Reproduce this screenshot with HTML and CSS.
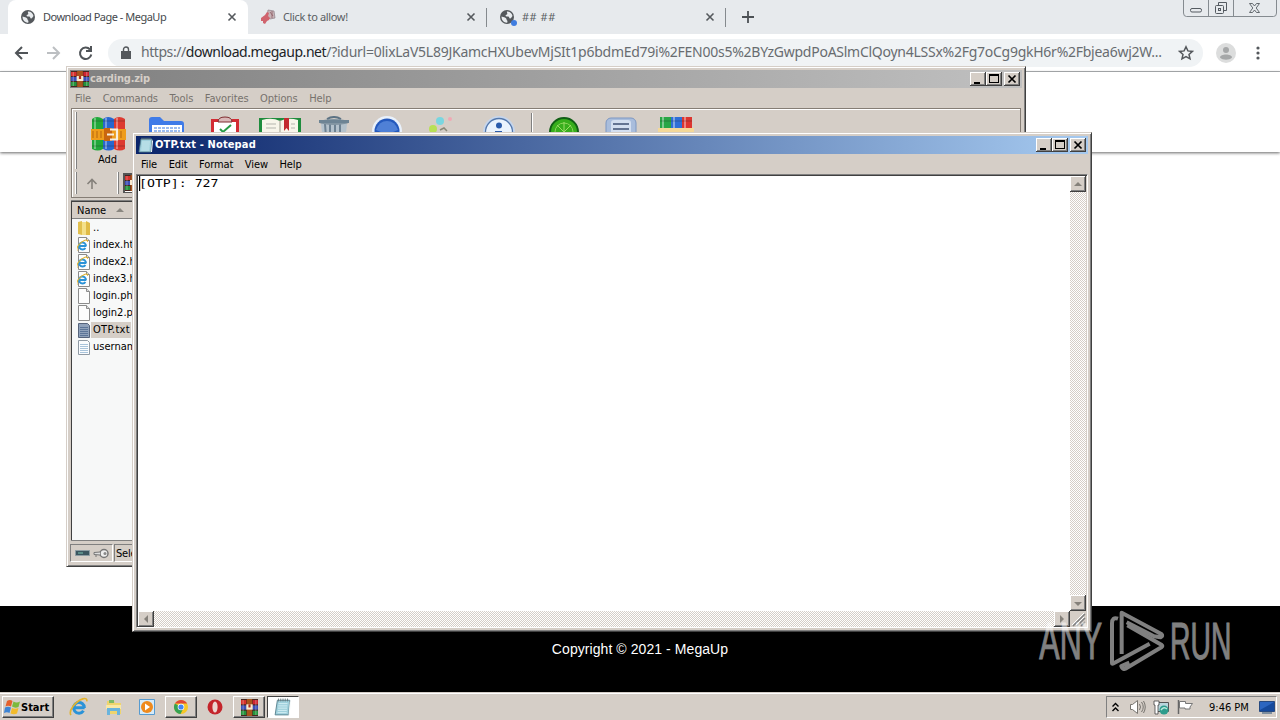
FILE: index.html
```html
<!DOCTYPE html>
<html lang="en">
<head>
  <meta charset="UTF-8" />
  <title>Download Page - MegaUp</title>
  <link rel="stylesheet" href="styles.css">
</head>
<body>

  <!-- shared icons -->
  <svg class="defs" width="0" height="0">
    <symbol id="close" viewBox="0 0 10 10"><path d="M1.5 1.5l7 7M8.5 1.5l-7 7" stroke="#55595d" stroke-width="1.6"/></symbol>
    <symbol id="globe" viewBox="0 0 16 16">
      <circle cx="8" cy="8" r="7" fill="#54585c"/>
      <path d="M2.6 7.6c2 .6 3.6.8 4.600 2 .6 1 .2 1.600 1.200 2.200v1.800C5 14 2.200 11 2.600 7.600zM8 2.400c2.600-.2 5 1.600 5.500 4.600-.8 1-1.200 2.400-2.500 2.400-1 0-.6-1.600-1.600-1.900-1.200-.3-2.600.2-2.800-.8-.2-1.200 1.400-1 1.700-1.800.2-.8-.8-1.300-.3-2.500z" fill="#e9ecef"/>
    </symbol>
    <symbol id="rar" viewBox="0 0 16 16">
      <path d="M0 0h16v16H0z" fill="#44251f"/>
      <path d="M0 1h5v4H0z" fill="#d8302c"/><path d="M5.500 1h5v4h-5z" fill="#c83a2c"/><path d="M11 1h5v4h-5z" fill="#cf2430"/>
      <path d="M0 6h16v4H0z" fill="#3c4fb8"/><path d="M0 11h5v4H0zM11 11h5v4h-5z" fill="#23933b"/>
      <path d="M5.500 0h5v16h-5z" fill="#a8541c"/><path d="M5 5h6v5H5z" fill="#f8e9d0"/><path d="M7 5h2v3H7z" fill="#b32c1c"/>
      <path d="M2 1v14M14 1v14" stroke="#eee" stroke-opacity=".35"/>
    </symbol>
    <symbol id="note" viewBox="0 0 16 16">
      <path d="M3 2h11l-1 13H1z" fill="#9fd0dc" stroke="#557f8b" stroke-width=".8"/>
      <path d="M4 5h8M3.800 7h8M3.600 9h8M3.400 11h8M3.200 13h8" stroke="#d8f2f5" stroke-width=".8"/>
      <path d="M4 .5v2.500M6 .5v2.500M8 .5v2.500M10 .5v2.500M12 .5v2.500" stroke="#68777b" stroke-width=".8"/>
      <path d="M14 3l1 1-1 11h-1z" fill="#f5fafa"/>
    </symbol>
    <symbol id="page" viewBox="0 0 14 16"><path d="M1.500 .5h8l3 3v12h-11z" fill="#fdfdfd" stroke="#8c8c8c"/><path d="M9.500 .5v3h3" fill="#ddd" stroke="#8c8c8c"/></symbol>
    <symbol id="ie" viewBox="0 0 16 16">
      <path d="M4 8.600h8.500M12.300 8.800A4.300 4.300 0 1 0 11.600 11" fill="none" stroke="#2b93d8" stroke-width="2.400"/>
      <path d="M1.500 14.500C-.5 11 5 3.500 11 1.500c2.500-.8 3.600.2 3.200 2" fill="none" stroke="#e3b32c" stroke-width="1.300"/>
    </symbol>
    <symbol id="lines" viewBox="0 0 14 16"><path d="M1.500 1.500h9l2 2v12h-11z" fill="#fafcfe" stroke="#909aa4"/><path d="M3 5.500h8M3 7.500h8M3 9.500h8M3 11.500h8M3 13.500h8" stroke="#a9c4db"/></symbol>
    <symbol id="min" viewBox="0 0 16 14"><path d="M4 10h6v2H4z"/></symbol>
    <symbol id="max" viewBox="0 0 16 14"><path d="M3 2h10v9H3zM4 4v6h8V4z" fill-rule="evenodd"/></symbol>
    <symbol id="x" viewBox="0 0 16 14"><path d="M4.500 3.500l7 7M11.500 3.500l-7 7" stroke="#000" stroke-width="1.700"/></symbol>
  </svg>

  <div class="desktop">

    <!-- browser -->
    <div class="tabs">
      <div class="tab active">
        <svg width="16" height="16"><use href="#globe"/></svg>
        <span>Download Page - MegaUp</span>
        <svg class="close" width="10" height="10"><use href="#close"/></svg>
      </div>
      <div class="tab">
        <svg width="16" height="16" viewBox="0 0 16 16">
          <path d="M8 1l6 1 1 7-5 1-3-3z" fill="#c8b4b8" stroke="#8f8088" stroke-width=".7"/>
          <path d="M10 3l3 4M12 2v7" stroke="#8d5d66" stroke-width=".8"/>
          <path d="M1 9l4-3 2-3 2 1-1 3 2 2-1 2-2 1-2 3-2-1v-2L1 12z" fill="#d0646e"/>
        </svg>
        <span>Click to allow!</span>
        <svg class="close" width="10" height="10"><use href="#close"/></svg>
      </div>
      <div class="tab loading">
        <svg width="18" height="18" viewBox="0 0 18 18"><use href="#globe" width="16" height="16" y="1"/><circle cx="15" cy="15" r="3" fill="#3f7de0"/></svg>
        <span>## ##</span>
        <svg class="close" width="10" height="10"><use href="#close"/></svg>
      </div>
      <svg class="plus" width="12" height="12"><path d="M6 0v12M0 6h12" stroke="#4c5054" stroke-width="1.800"/></svg>
      <svg class="controls" width="94" height="18" fill="none" stroke="#858b90">
        <path d="M.5 0v13q0 3.500 3 3.500h87q3 0 3-3.500V0M25.500 0v16M50.500 0v16"/>
        <g stroke="#555b61"><rect x="7.500" y="8.500" width="11" height="3.500" rx="1.500"/><path d="M35.500 5V2.500h8v8H41"/><rect x="32.500" y="5.500" width="8" height="8" rx="1"/><rect x="35.500" y="8.500" width="2" height="2"/>
        <path d="M66.500 3.500h3l2 2.500 2-2.500h3l-3.300 4.500 3.300 4.500h-3l-2-2.500-2 2.500h-3l3.300-4.500z" stroke-width=".9"/></g>
      </svg>
    </div>

    <div class="toolbar">
      <svg width="80" height="16" fill="none" stroke="#505458" stroke-width="2">
        <path d="M14 8H2M8 2L2 8l6 6"/>
        <path d="M33 8h12M39 2l6 6-6 6" stroke="#bcbfc2"/>
        <path d="M76 4.500A5.700 5.700 0 1 0 77.300 9.500M77 1v5h-5"/>
      </svg>
      <div class="omnibox">
        <svg width="10" height="13" viewBox="0 0 10 13"><path d="M0 5h10v8H0z" fill="#54585c"/><path d="M2.500 5V3.500a2.500 2.500 0 0 1 5 0V5" fill="none" stroke="#54585c" stroke-width="1.400"/></svg>
        <span class="url">https://<b>download.megaup.net</b><i>/?idurl=0lixLaV5L89JKamcHXUbevMjSIt1p6bdmEd79i%2FEN00s5%2BYzGwpdPoASlmClQoyn4LSSx%2Fg7oCg9gkH6r%2Fbjea6wj2W...</i></span>
        <svg class="star" width="16" height="16" viewBox="0 0 16 16"><path d="M8 1.800l1.900 4.100 4.500.5-3.400 3 1 4.400L8 11.500l-4 2.300 1-4.400-3.400-3 4.500-.5z" fill="none" stroke="#54585c" stroke-width="1.500"/></svg>
      </div>
      <svg class="avatar" width="20" height="20"><circle cx="10" cy="10" r="10" fill="#dcdddd"/><circle cx="10" cy="7" r="3" fill="#a5a7a8"/><path d="M4 14.500c0-4 12-4 12 0-2.500 3-9.500 3-12 0z" fill="#a5a7a8"/></svg>
      <svg width="4" height="14" fill="#54585c"><circle cx="2" cy="2" r="1.600"/><circle cx="2" cy="7" r="1.600"/><circle cx="2" cy="12" r="1.600"/></svg>
    </div>

    <div class="site">
      <div class="site-header"></div>
      <div class="site-footer">Copyright © 2021 - MegaUp</div>
    </div>

    <!-- WinRAR -->
    <div class="window winrar">
      <div class="titlebar">
        <svg width="18" height="16" viewBox="0 0 16 16" preserveAspectRatio="none"><use href="#rar" width="16" height="16"/></svg>
        <span>carding.zip</span>
        <div class="buttons">
          <svg width="16" height="14"><use href="#min"/></svg>
          <svg width="16" height="14"><use href="#max"/></svg>
          <svg width="16" height="14"><use href="#x"/></svg>
        </div>
      </div>
      <div class="menu">
        <span>File</span><span>Commands</span><span>Tools</span><span>Favorites</span><span>Options</span><span>Help</span>
      </div>
      <div class="rebar">
        <div class="tools">
          <div class="grip"></div>
          <div class="tool w56">
            <svg width="36" height="36" viewBox="0 0 36 36">
              <path d="M1 3q5-4 11 0v30q-5 3-11 0z" fill="#20a83a"/><path d="M12 3q5-4 11 0v30q-5 3-11 0z" fill="#2867d0"/><path d="M23 3q5-4 11 0v30q-5 3-11 0z" fill="#dd3a30"/>
              <path d="M4 2v31M15 2v31M26 2v31" stroke="#fff" stroke-opacity=".35" stroke-width="2"/>
              <path d="M1 5h33M1 30h33" stroke="#222" stroke-opacity=".3"/>
              <path d="M0 13h35v11H0z" fill="#ee9c1c"/><path d="M2 15v7M6 15v7M10 15v7M30 15v7" stroke="#b5650e"/>
              <path d="M13 12h8v13h-8z" fill="#c9660f"/><path d="M19 13.500h7v10h-7M16 18.500h7" fill="none" stroke="#f6eee0" stroke-width="2.200"/>
            </svg>
            <span>Add</span>
          </div>
          <div class="tool w60"><svg width="38" height="34"><path d="M1 4q0-3 3-3h8l4 4h17q3 0 3 3v24H1z" fill="#3f7be8"/><path d="M4 9h30v20H4z" fill="#fff"/><path d="M6 12h26M6 15h26" stroke="#9cbcf0" stroke-width="2" stroke-dasharray="3 1"/></svg></div>
          <div class="tool w56"><svg width="30" height="34"><path d="M1 3h28v30H1z" fill="#d22c34"/><path d="M4 6h22v26H4z" fill="#fff"/><path d="M8 6q0-5 7-5t7 5z" fill="#d9b8b8" stroke="#7f2d30"/><path d="M10 13l3 3 8-7" fill="none" stroke="#269b45" stroke-width="2"/></svg></div>
          <div class="tool w54"><svg width="42" height="34"><path d="M0 2h42v31H0z" fill="#1f8c3d"/><path d="M3 4q10-3 18 1 8-4 18-1v28H3z" fill="#f8f5ea"/><path d="M21 4v28" stroke="#998"/><path d="M7 8h10M7 12h10M32 8h4M32 12h4" stroke="#b5b5ae"/><path d="M25 2h5v13l-2.500-3-2.500 3z" fill="#c32a30"/></svg></div>
          <div class="tool w54"><svg width="32" height="34"><path d="M3 8h26l-3 26H6z" fill="#b4c2cc"/><path d="M7 8l2 26M12 8v26M17 8v26M22 8v26" stroke="#6d8292" stroke-width="2"/><ellipse cx="16" cy="6" rx="15" ry="3" fill="#8295a2"/><path d="M1 4h30v3H1z" fill="#6d8494"/><path d="M9 3q7-4 14 0" fill="none" stroke="#5d7384" stroke-width="2"/></svg></div>
          <div class="tool w52"><svg width="30" height="34"><circle cx="15" cy="15" r="15" fill="#e9f1fb"/><circle cx="15" cy="15" r="12.500" fill="#2459bd"/><path d="M4 14q3-9 11-9t11 9q-11 6-22 0z" fill="#4f80d6"/></svg></div>
          <div class="tool w56"><svg width="30" height="34"><circle cx="14" cy="5" r="4" fill="#62d8e6" fill-opacity=".8"/><circle cx="24" cy="3" r="2" fill="#f0a9b4"/><circle cx="7" cy="13" r="4" fill="#b8e055"/><path d="M14 14l4-2 3 3" stroke="#887" stroke-width="1.500" fill="none"/></svg></div>
          <div class="tool w60"><svg width="32" height="34"><circle cx="16" cy="16" r="16" fill="#c5d5ec"/><circle cx="16" cy="16" r="13.500" fill="#eaf3fd" stroke="#5378ad" stroke-width="1.300"/><circle cx="16" cy="9.500" r="3" fill="#2b5cab"/><path d="M12 15h7v10h-7z" fill="#2b5cab"/></svg></div>
          <div class="sep"></div>
          <div class="tool w58"><svg width="30" height="34"><circle cx="15" cy="16" r="14" fill="#37ae1c" stroke="#115f16" stroke-width="2"/><circle cx="15" cy="16" r="9" fill="none" stroke="#8bd45a"/><path d="M15 6v10M8 9l7 7 7-7" stroke="#9cdd68" fill="none"/></svg></div>
          <div class="tool w56"><svg width="32" height="34"><rect x="1" y="2" width="30" height="32" rx="5" fill="#a9bddc" stroke="#7d97c2"/><rect x="6" y="4" width="20" height="28" rx="3" fill="#d4dff0"/><path d="M8 8h16M8 13h16" stroke="#3f5273" stroke-width="1.500"/></svg></div>
          <div class="tool w54"><svg width="36" height="34"><path d="M2 1h11v12H2z" fill="#29a646"/><path d="M13 1h11v12H13z" fill="#2f6fd6"/><path d="M24 1h10v12H24z" fill="#dc352f"/><path d="M5 1v11M16 1v11M27 1v11" stroke="#fff" stroke-opacity=".4" stroke-width="2"/><path d="M2 5h32" stroke="#222" stroke-opacity=".3"/><path d="M0 12h36v20H0z" fill="#f4d898"/></svg></div>
        </div>
        <div class="address">
          <div class="grip"></div>
          <svg class="up" width="12" height="12"><path d="M6 11V2M1.500 6L6 1.500 10.500 6" fill="none" stroke="#85817b" stroke-width="1.600"/></svg>
          <div class="grip"></div>
          <div class="combo"><svg width="16" height="16"><use href="#rar"/></svg></div>
        </div>
      </div>
      <div class="files">
        <div class="files-head">Name <svg width="8" height="4"><path d="M4 0l4 4H0z" fill="#8a8781"/></svg></div>
        <div class="file"><svg width="14" height="16" viewBox="0 0 14 16"><path d="M1 2l4-1v14l-4-1z" fill="#e2c04e"/><path d="M5 2h4v13H5z" fill="#f4e08a"/><path d="M9 1l4 2v12H9z" fill="#e0bb47"/></svg><span>..</span></div>
        <div class="file"><svg width="14" height="16" viewBox="0 0 14 16"><use href="#page" width="14" height="16"/><use href="#ie" y="2" x="-1" width="13" height="13"/></svg><span>index.html</span></div>
        <div class="file"><svg width="14" height="16" viewBox="0 0 14 16"><use href="#page" width="14" height="16"/><use href="#ie" y="2" x="-1" width="13" height="13"/></svg><span>index2.html</span></div>
        <div class="file"><svg width="14" height="16" viewBox="0 0 14 16"><use href="#page" width="14" height="16"/><use href="#ie" y="2" x="-1" width="13" height="13"/></svg><span>index3.html</span></div>
        <div class="file"><svg width="14" height="16"><use href="#page"/></svg><span>login.php</span></div>
        <div class="file"><svg width="14" height="16"><use href="#page"/></svg><span>login2.php</span></div>
        <div class="file selected"><svg width="14" height="16" viewBox="0 0 14 16"><path d="M1.500 1.500h9l2 2v12h-11z" fill="#90a2bb" stroke="#56647c"/><path d="M3 5.500h8M3 7.500h8M3 9.500h8M3 11.500h8M3 13.500h8" stroke="#5c7598"/></svg><span>OTP.txt</span></div>
        <div class="file"><svg width="14" height="16"><use href="#lines"/></svg><span>username.txt</span></div>
      </div>
      <div class="status">
        <div class="pane icons">
          <svg width="16" height="8"><path d="M.5 1.500h14v5H.5z" fill="#3b5660" stroke="#8d9da3"/><path d="M3 4h5" stroke="#7dc2b0"/></svg>
          <svg width="17" height="11"><circle cx="11" cy="5.500" r="4" fill="#eee" stroke="#777" stroke-width="1.500"/><circle cx="12" cy="5.500" r="1.500" fill="#888"/><path d="M7 4L1 4.500v2L7 7M3 7v2" fill="#ddd" stroke="#777"/></svg>
        </div>
        <div class="pane sel">Selected</div>
      </div>
    </div>

    <!-- Notepad -->
    <div class="window notepad">
      <div class="titlebar">
        <svg width="16" height="16"><use href="#note"/></svg>
        <span>OTP.txt - Notepad</span>
        <div class="buttons">
          <svg width="16" height="14"><use href="#min"/></svg>
          <svg width="16" height="14"><use href="#max"/></svg>
          <svg width="16" height="14"><use href="#x"/></svg>
        </div>
      </div>
      <div class="menu">
        <span>File</span><span>Edit</span><span>Format</span><span>View</span><span>Help</span>
      </div>
      <div class="editor">
        <div class="text"><span>[OTP]: 727</span></div>
        <div class="scroll vertical">
          <svg class="arrow" width="16" height="16"><path d="M8 6l4 4H4z" fill="#85817b"/></svg>
          <svg class="arrow" width="16" height="16"><path d="M4 7h8l-4 4z" fill="#85817b"/></svg>
        </div>
        <div class="scroll horizontal">
          <svg class="arrow" width="16" height="16"><path d="M10 4v8L6 8z" fill="#85817b"/></svg>
          <svg class="arrow" width="16" height="16"><path d="M6 4v8l4-4z" fill="#85817b"/></svg>
        </div>
        <svg class="corner" width="16" height="16"><path d="M3 15L15 3M7 15l8-8M11 15l4-4" stroke="#808080" stroke-width="1.500"/><path d="M2 14L14 2M6 14l8-8" stroke="#fff"/></svg>
      </div>
    </div>

    <svg class="watermark" width="220" height="66" viewBox="45 54 660 198">
      <text x="58" y="207" textLength="188" lengthAdjust="spacingAndGlyphs">ANY</text>
      <text x="450" y="207" textLength="184" lengthAdjust="spacingAndGlyphs">RUN</text>
      <g fill="none" stroke="#fff" stroke-width="12" stroke-linejoin="round">
        <path d="M305 192V68L424 132q6 6-2 10l-20-3-82-42"/>
        <path d="M294 86q-18-6-18 14v118q0 6 8 0l105-57"/>
        <path d="M322 106l102 58q6 4 0 8l-108 64q-8 4-12-8l24-10"/>
      </g>
    </svg>

    <!-- taskbar -->
    <div class="taskbar">
      <div class="start">
        <svg width="17" height="16" viewBox="0 0 17 16"><path d="M3 2q3-2 5.500 0L7 7.500Q4 6 1.500 7.500z" fill="#e4602c"/><path d="M9.500 2.500q3 2 6.500 0L14.500 8Q11 9.500 8 7.500z" fill="#7cb93c"/><path d="M1 8.500q3-1.500 6 0L5.500 14Q3 12.500 0 14z" fill="#3e84d4"/><path d="M8 9q3 1.500 6.500 0L13 14.500q-3 1.500-6.500 0z" fill="#f3bb2a"/></svg>
        <span>Start</span>
      </div>
      <div class="task"><svg width="20" height="20"><use href="#ie"/></svg></div>
      <div class="task"><svg width="17" height="17" viewBox="0 0 17 17"><path d="M2 2h7l1 2h6v11H2z" fill="#efd46d"/><path d="M4 1h5v3H4z" fill="#7cba65"/><path d="M1 6h15v4H1z" fill="#f9e8a5"/><path d="M2 16V9h13v7h-3v-4H5v4z" fill="#6ab4dd"/></svg></div>
      <div class="task"><svg width="16" height="16"><path d="M.5 .5h15v15H.5z" fill="#d6ebf9" stroke="#579bd0"/><circle cx="8" cy="8" r="6" fill="#ef8a1d"/><path d="M6 4.500v7l5-3.500z" fill="#fff"/></svg></div>
      <div class="task raised"><svg width="16" height="16" viewBox="0 0 16 16"><circle cx="8" cy="8" r="7" fill="#f6c727"/><path d="M8 8L1.900 4.500A7 7 0 0 0 7.500 15L10 10z" fill="#36a252"/><path d="M2 4.500A7 7 0 0 1 14.100 4.500H8z" fill="#df4638"/><circle cx="8" cy="8" r="3.300" fill="#fff"/><circle cx="8" cy="8" r="2.600" fill="#4285f4"/></svg></div>
      <div class="task"><svg width="16" height="16"><circle cx="8" cy="8" r="7.500" fill="#c4242b"/><ellipse cx="8" cy="8" rx="2.600" ry="5.500" fill="#ecd5d0"/></svg></div>
      <div class="task raised"><svg width="17" height="17"><use href="#rar"/></svg></div>
      <div class="task pressed"><svg width="18" height="18"><use href="#note"/></svg></div>
      <div class="tray">
        <svg class="more" width="7" height="10"><path d="M.5 4.500l3-3 3 3M.5 9l3-3 3 3" fill="none" stroke="#000" stroke-width="1.400"/></svg>
        <svg width="17" height="16" fill="none" stroke="#77746f"><path d="M1.500 5.500h2l5-4v13l-5-4h-2z" fill="#fff"/><path d="M10.500 5q2 3 0 6M12.500 3q3.500 5 0 10M14.500 2q3.500 6 0 12"/></svg>
        <svg width="17" height="16"><path d="M4.500 3.500h11v9h-11z" fill="#b9d5dc" stroke="#555"/><path d="M1 2h5v4H5v9H2V6H1z" fill="#fff" stroke="#444" stroke-width=".8"/><circle cx="11" cy="11" r="4.500" fill="#2d9c8c"/><path d="M8 11q3-4 6-1" stroke="#bde8dc" fill="none" stroke-width="1.500"/></svg>
        <svg width="17" height="16"><path d="M1.500 1v14" stroke="#666" stroke-width="1.500"/><path d="M2.500 2.500h6v2h7l-2.500 3.500 0 2H8v-1H2.500z" fill="#fff" stroke="#777"/></svg>
        <span>9:46 PM</span>
        <svg width="16" height="13"><path d="M.5 .5h15v10H.5z" fill="#2c66c0" stroke="#274a80"/><path d="M1 9L15 1v9H1z" fill="#164a9c"/><path d="M3 12h10" stroke="#607890" stroke-width="1.500"/></svg>
      </div>
    </div>
  </div>

</body>
</html>
```
FILE: styles.css
```css
body {
  margin: 0;
  overflow: hidden;
  font-family: "DejaVu Sans Condensed", "Open Sans", sans-serif;
  font-size: 11px;
  color: #000;
}

svg {
  display: block;
  flex: none;
}

.defs {
  position: absolute;
}

.desktop {
  position: relative;
  width: 1280px;
  height: 720px;
  display: flex;
  flex-direction: column;
  overflow: hidden;
  background: #fff;
}

/* browser */
.tabs {
  display: flex;
  height: 34px;
  padding-left: 8px;
  background: #e7eaed;
}

.tab {
  display: flex;
  align-items: center;
  box-sizing: border-box;
  width: 239px;
  padding: 0 11px 0 12px;
  font-family: "Noto Sans", sans-serif;
  font-size: 11px;
  letter-spacing: -.35px;
  line-height: 15px;
  padding-bottom: 1px;
  color: #5a5e62;
  white-space: nowrap;
  background: linear-gradient(#858a8e, #858a8e) right 8px / 1px 19px no-repeat;
}

.tab.active {
  width: 240px;
  background: #fff;
  border-radius: 8px 8px 0 0;
  color: #45494d;
  letter-spacing: -.5px;
}

.tab span {
  margin-left: 7px;
}

.tab.loading span {
  margin-left: 5px;
  letter-spacing: .5px;
}

.tab .close {
  margin-left: auto;
}

.plus {
  margin: 11px 0 0 16px;
}

.controls {
  margin-left: auto;
  margin-right: 3px;
}

.toolbar {
  display: flex;
  align-items: center;
  height: 37px;
  padding-left: 14px;
  border-bottom: 1px solid #adb0b2;
}

.omnibox {
  display: flex;
  align-items: center;
  box-sizing: border-box;
  width: 1095px;
  height: 28px;
  margin-left: 14px;
  padding: 0 9px 0 13px;
  border-radius: 14px;
  background: #f0f3f5;
}

.url {
  margin-left: 10px;
  margin-top: -2px;
  font-family: "Noto Sans", sans-serif;
  font-size: 14px;
  letter-spacing: -.44px;
  color: #686c70;
  white-space: nowrap;
}

.url b {
  font-weight: normal;
  color: #202326;
}

.url i {
  font-style: normal;
  letter-spacing: -.26px;
}

.star {
  margin-left: auto;
}

.avatar {
  margin: 0 20px 0 13px;
}

.site {
  display: flex;
  flex-direction: column;
  justify-content: space-between;
  flex: 1;
}

.site-header {
  height: 80px;
  box-shadow: 0 1px 3px #666;
}

.site-footer {
  height: 86px;
  line-height: 87px;
  background: #000;
  color: #fff;
  text-align: center;
  font-family: "Liberation Sans", Arial, sans-serif;
  font-size: 14px;
  letter-spacing: .07px;
}

/* windows */
.window {
  position: absolute;
  display: flex;
  flex-direction: column;
  box-sizing: border-box;
  background: #d5cec7;
  border: 1px solid;
  border-color: #d5cec7 #404040 #404040 #d5cec7;
  box-shadow: inset 1px 1px #fff, inset -1px -1px #808080;
}

.winrar {
  left: 66px;
  top: 66px;
  width: 960px;
  height: 501px;
  padding: 3px;
}

.notepad {
  left: 132px;
  top: 132px;
  width: 960px;
  height: 500px;
  padding: 3px;
}

.titlebar {
  display: flex;
  align-items: center;
  height: 18px;
  padding: 0 2px;
  font-weight: bold;
  color: #d5cec7;
  background: linear-gradient(90deg, #808080, #c0c0c0);
}

.winrar .titlebar {
  padding-left: 1px;
  letter-spacing: -.2px;
}

.notepad .titlebar {
  color: #fff;
  letter-spacing: .15px;
  background: linear-gradient(90deg, #0a246a, #a6caf0);
}

.titlebar span {
  margin: -1px 0 0 1px;
}

.buttons {
  display: flex;
  margin-left: auto;
}

.buttons svg,
.arrow {
  background: #d5cec7;
  box-shadow: inset -1px -1px #404040, inset 1px 1px #fff, inset -2px -2px #808080;
}

.buttons svg:last-child {
  margin-left: 2px;
}

.menu {
  display: flex;
  align-items: center;
  gap: 11.6px;
  height: 20px;
  padding-left: 5px;
  letter-spacing: -.1px;
}

.winrar .menu {
  color: #77726d;
}

/* WinRAR */
.rebar {
  height: 88px;
  margin: 0 1px;
  border: 1px solid #857d75;
  box-shadow: inset 1px 1px #fff;
}

.tools {
  display: flex;
  height: 62px;
  padding-left: 3px;
}

.grip {
  width: 1px;
  margin: 3px 4px 2px 0;
  border-right: 1px solid #808080;
  background: #fff;
}

.tool {
  display: flex;
  flex-direction: column;
  align-items: center;
  padding-top: 7px;
}

.tool span {
  margin: 1px 3px 0 0;
}

.w52 { width: 52px; }
.w54 { width: 54px; }
.w56 { width: 56px; }
.w58 { width: 58px; }
.w60 { width: 60px; }

.sep {
  width: 1px;
  margin: 4px 2px;
  border-left: 1px solid #808080;
  background: #fff;
}

.address {
  display: flex;
  height: 25px;
  padding-left: 3px;
}

.address .grip {
  margin: 1px 4px 2px 0;
}

.up {
  margin: 7px 19px 0 5px;
}

.combo {
  flex: 1;
  height: 17px;
  margin: 2px 0 0;
  border: 2px solid #555;
  border-width: 2px 1px 1px 2px;
  background: #fff;
}

.files {
  flex: 1;
  margin: 2px 1px 0;
  border: 1px solid #808080;
  border-width: 1px 1px 1px 0;
  box-shadow: inset 1px 1px #404040;
  padding: 1px 0 0 1px;
  background: #f7f8f8;
}

.files-head {
  display: flex;
  align-items: center;
  gap: 10px;
  height: 16px;
  padding-left: 5px;
  background: #d5cec7;
  border-bottom: 1px solid #808080;
}

.file {
  display: flex;
  align-items: center;
  height: 17px;
  padding-left: 5px;
}

.file span {
  line-height: 16px;
  padding: 0 1px 0 2px;
}

.file.selected span {
  background: #d5cec7;
  letter-spacing: .3px;
}

.status {
  display: flex;
  gap: 1px;
  height: 18px;
  margin: 3px 0 1px;
}

.pane {
  display: flex;
  align-items: center;
  gap: 2px;
  border: 1px solid;
  border-color: #808080 #fff #fff #808080;
}

.pane.icons {
  width: 37px;
  padding-left: 4px;
}

.pane.sel {
  flex: 1;
  padding-left: 1px;
  letter-spacing: -.2px;
}

/* Notepad */
.editor {
  display: grid;
  grid-template: 1fr 16px / 1fr 16px;
  flex: 1;
  border: 1px solid;
  border-color: #808080 #fff #fff #808080;
  box-shadow: inset 1px 1px #404040;
  padding: 1px 1px 0 1px;
}

.text {
  background: #fff;
  padding: 0 1px;
  font-family: "DejaVu Sans Mono", monospace;
}

.text span {
  display: inline-block;
  line-height: 15px;
  border-left: 1px solid #000;
  text-indent: -1px;
  transform: scaleX(1.2);
  transform-origin: 0 0;
}

.scroll {
  display: flex;
  justify-content: space-between;
  background: repeating-conic-gradient(#fff 0 25%, #d5cec7 0 50%) 0 0 / 2px 2px;
}

.vertical {
  flex-direction: column;
}

.watermark {
  position: absolute;
  left: 1035px;
  top: 608px;
  overflow: visible;
  opacity: .5;
}

.watermark text {
  font-family: "Liberation Sans", sans-serif;
  font-size: 156px;
  fill: #fff;
  stroke: #fff;
  stroke-width: 3px;
}

/* taskbar */
.taskbar {
  display: flex;
  align-items: center;
  box-sizing: border-box;
  height: 28px;
  padding: 2px 3px 1px 2px;
  background: #d5cec7;
  border-top: 1px solid #d5cec7;
  box-shadow: inset 0 1px #fff;
}

.start,
.task.raised {
  border: 1px solid;
  border-color: #fff #404040 #404040 #fff;
  box-shadow: inset -1px -1px #808080;
}

.start {
  display: flex;
  align-items: center;
  box-sizing: border-box;
  width: 52px;
  height: 22px;
  margin-right: 9px;
  padding-left: 1px;
  font-weight: bold;
}

.task {
  display: flex;
  align-items: center;
  justify-content: center;
  box-sizing: border-box;
  width: 32px;
  height: 22px;
  margin-right: 2px;
}

.task.pressed {
  background: #fff;
  border: 1px solid;
  border-color: #404040 #fff #fff #404040;
}

.tray {
  display: flex;
  align-items: center;
  gap: 7px;
  box-sizing: border-box;
  height: 22px;
  margin-left: auto;
  width: 171px;
  padding-left: 5px;
  border: 1px solid;
  border-color: #808080 #fff #fff #808080;
}

.more {
  margin-right: 3px;
}

.tray span {
  margin: 0 3px 0 8px;
  white-space: nowrap;
}
```
